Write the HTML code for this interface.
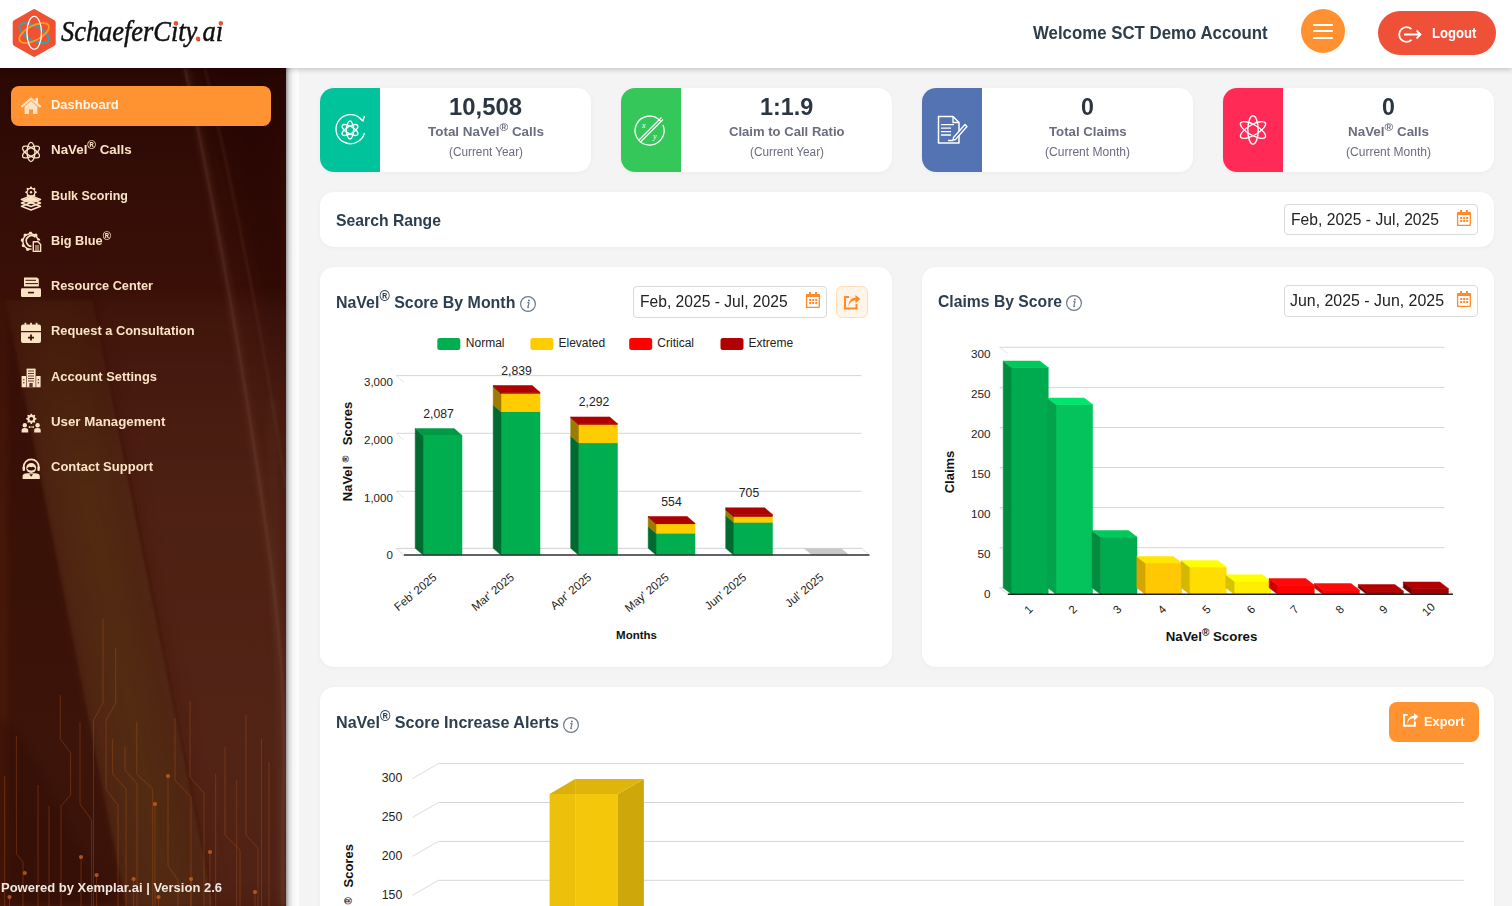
<!DOCTYPE html>
<html><head><meta charset="utf-8">
<style>
*{box-sizing:border-box;margin:0;padding:0}
html,body{width:1512px;height:906px;overflow:hidden;background:#f4f4f4;font-family:"Liberation Sans",sans-serif}
.abs{position:absolute}
#hdr{position:absolute;left:0;top:0;width:1512px;height:68px;background:#fff;box-shadow:0 2px 5px rgba(0,0,0,.18);z-index:5}
#side{position:absolute;left:0;top:68px;width:286px;height:838px;overflow:hidden;z-index:3;
 background:linear-gradient(170deg,#2a0904 0%,#330d06 25%,#4a1a0c 55%,#55230f 75%,#4a1c0c 100%)}
#strip{position:absolute;left:286px;top:68px;width:13px;height:838px;background:linear-gradient(90deg,#9a9a9a 0,#d8d8d8 3px,#f6f6f6 7px,#fdfdfd 13px);z-index:2}
.mi{position:absolute;left:51px;font-size:13px;font-weight:700;color:#fce4c6;white-space:nowrap;line-height:13px}
.t sup{font-size:.88em;vertical-align:top;position:relative;top:-.36em;line-height:1}
.t{z-index:6}
.card{position:absolute;background:#fff;border-radius:14px;box-shadow:0 1px 4px rgba(0,0,0,.04)}
.stat .ib{position:absolute;left:0;top:0;width:60px;height:84px;border-radius:14px 0 0 14px}
.stat .num{position:absolute;left:60px;right:0;text-align:center;top:94px;font-size:24px;font-weight:700;color:#2b3640}
.t{white-space:nowrap;position:absolute;line-height:1}
.date{position:absolute;width:194px;height:31.3px;border:1px solid #d9d9d9;border-radius:4px;background:#fff}
</style></head><body>

<!-- HEADER -->
<div id="hdr">
  <svg class="abs" style="left:0;top:0" width="240" height="68" viewBox="0 0 240 68">
    <path d="M34.2 11.6 L53.2 22.4 L53.2 43.6 L34.2 54.4 L15.2 43.6 L15.2 22.4 Z" fill="#ee5232" stroke="#ee5232" stroke-width="5" stroke-linejoin="round"/>
    <ellipse cx="34.1" cy="33" rx="16.3" ry="7.3" fill="none" stroke="#2aa8ba" stroke-width="1.8" transform="rotate(28 34.1 33)"/>
    <ellipse cx="34.1" cy="33" rx="16.3" ry="7.3" fill="none" stroke="#ff9a1e" stroke-width="1.8" transform="rotate(-28 34.1 33)"/>
    <ellipse cx="34.2" cy="32.8" rx="7.3" ry="16.4" fill="none" stroke="#fff" stroke-width="1.3"/>
  </svg>
  <div class="t" id="logo" style="left:61px;top:17px;font-family:'Liberation Serif',serif;font-size:29px;font-style:italic;color:#111;-webkit-text-stroke:0.5px #111;transform:scaleX(0.91);transform-origin:0 0">SchaeferCity.ai</div>
  <svg class="abs" style="left:0;top:0;z-index:7" width="240" height="68"><g fill="#ee5232"><circle cx="175.9" cy="23.3" r="2.2"/><circle cx="220.8" cy="23.1" r="2.2"/><circle cx="198" cy="38.7" r="2.2"/></g></svg>
  <div class="abs" style="left:1301px;top:9px;width:44px;height:44px;border-radius:50%;background:#ff9130"></div>
  <div class="abs" style="left:1313px;top:23.5px;width:20px;height:2px;background:#fff;border-radius:1px"></div>
  <div class="abs" style="left:1313px;top:30px;width:20px;height:2px;background:#fff;border-radius:1px"></div>
  <div class="abs" style="left:1313px;top:36.5px;width:20px;height:2px;background:#fff;border-radius:1px"></div>
  <div class="abs" style="left:1378px;top:11px;width:118px;height:44px;border-radius:22px;background:#ee5138"></div>
  <svg class="abs" style="left:1398px;top:25px" width="25" height="19" viewBox="0 0 25 19">
    <path d="M13.5 4.2 A7.3 7.3 0 1 0 13.5 14.8" fill="none" stroke="#fff" stroke-width="1.8"/>
    <path d="M6 9.5 H22.5 M18.5 5.5 L22.5 9.5 L18.5 13.5" fill="none" stroke="#fff" stroke-width="1.8"/>
  </svg>
</div>

<!-- SIDEBAR -->
<div id="side">
 <svg class="abs" style="left:0;top:0" width="286" height="838" viewBox="0 0 286 838">
  <defs>
   <linearGradient id="sg1" x1="0" y1="0" x2="0" y2="1">
    <stop offset="0" stop-color="#2a0804"/><stop offset="0.15" stop-color="#340d06"/><stop offset="0.35" stop-color="#3e1208"/><stop offset="0.55" stop-color="#45180a"/><stop offset="0.8" stop-color="#4a1c0d"/><stop offset="1" stop-color="#481a0c"/>
   </linearGradient>
   <linearGradient id="fadeTop" x1="0" y1="0" x2="0" y2="1">
    <stop offset="0" stop-color="#fff" stop-opacity="0"/><stop offset="0.25" stop-color="#fff" stop-opacity="0.35"/><stop offset="0.5" stop-color="#fff" stop-opacity="1"/><stop offset="1" stop-color="#fff" stop-opacity="1"/>
   </linearGradient>
   <mask id="mk"><rect width="286" height="838" fill="url(#fadeTop)"/></mask>
   <filter id="b4" filterUnits="userSpaceOnUse" x="-200" y="-200" width="700" height="1300"><feGaussianBlur stdDeviation="3"/></filter>
   <filter id="b10" filterUnits="userSpaceOnUse" x="-200" y="-200" width="700" height="1300"><feGaussianBlur stdDeviation="10"/></filter>
   <filter id="b1" filterUnits="userSpaceOnUse" x="-200" y="-200" width="700" height="1300"><feGaussianBlur stdDeviation="1.2"/></filter>
  </defs>
  <rect width="286" height="838" fill="url(#sg1)"/>
  <polygon points="200,0 286,0 286,330" fill="#1a0402" opacity="0.35" filter="url(#b10)"/>
  <g mask="url(#mk)">
   <polygon points="93,232 300,232 300,838 214,838" fill="#62362a" opacity="0.32" filter="url(#b10)"/>
   <polygon points="5,232 93,232 214,838 126,838" fill="#58301a" opacity="0.5" filter="url(#b1)"/>
   <polygon points="25,232 75,232 190,838 150,838" fill="#5a3a10" opacity="0.25" filter="url(#b10)"/>
   <polygon points="-20,232 5,232 126,838 -20,838" fill="#1e0602" opacity="0.28" filter="url(#b4)"/>
   <polygon points="-20,232 8,232 8,838 -20,838" fill="#6a2a10" opacity="0.25" filter="url(#b4)"/>
   <polygon points="-20,632 19,664 115,838 -20,838" fill="#1e0602" opacity="0.15" filter="url(#b4)"/>
   <line x1="93" y1="232" x2="214" y2="838" stroke="#2a0a04" stroke-width="1.2" opacity="0.35" filter="url(#b1)"/>
  </g>
  <path d="M186 0 C 205 90, 238 260, 266 460 S 280 700, 283 838" stroke="#8a5a48" stroke-width="5" fill="none" opacity="0.22" filter="url(#b4)"/>
  <path d="M184.8 0 C 205 90, 238 260, 266 460 S 280 700, 283 838" stroke="#9a6a58" stroke-width="1.2" fill="none" opacity="0.35" filter="url(#b1)"/>
  <path d="M205 0 C 228 100, 262 260, 286 420" stroke="#7a4a38" stroke-width="2.5" fill="none" opacity="0.2" filter="url(#b1)"/>
  <path d="M272 330 C 276 500, 279 700, 283 838" stroke="#6a3a2a" stroke-width="6" fill="none" opacity="0.2" filter="url(#b4)"/>
  <g stroke="#b8561c" stroke-width="0.8" fill="none" opacity="0.45"><path d="M103 551 L103 635 L93.5 652 L93.5 838"/><path d="M115.7 580 L115.7 635 L106 652 L106 721 L118 737 L118 838"/><path d="M60.3 627 L60.3 671 L70.6 685 L70.6 727 L61 738 L61 838"/><path d="M80 654 L80 736 L91.6 752 L91.6 838"/><path d="M16.4 668 L16.4 786 L23 794 L23 838"/><path d="M4.6 708 L4.6 838"/><path d="M38 717 L38 838"/><path d="M49 738 L49 838"/><path d="M112.6 671 L112.6 706 L126 721 L126 838"/><path d="M125 679 L125 702 L137 716 L137 838"/><path d="M136.7 654 L136.7 706 L152.7 721 L152.7 838"/><path d="M155 736 L155 838"/><path d="M168 708 L168 798 L178 812 L178 838"/><path d="M175 650 L175 712 L191 729 L191 838"/><path d="M190 633 L190 709 L204 725 L204 838"/><path d="M210 784 L210 838"/><path d="M225 679 L225 767 L240 782 L240 838"/><path d="M236.7 712 L236.7 838"/><path d="M246 647 L246 767 L258 780 L258 838"/><path d="M261.5 671 L261.5 838"/><path d="M269 694 L269 838"/><path d="M215.7 706 L215.7 838"/><path d="M81 789 L81 838"/><path d="M96.6 807 L96.6 838"/><path d="M133.6 811 L133.6 838"/><path d="M191 811 L191 838"/><path d="M9.5 829 L9.5 838"/><path d="M158.5 829 L158.5 838"/><path d="M255 824 L255 838"/></g>
  <g fill="#c8621e" opacity="0.8"><circle cx="155" cy="736" r="2.1"/><circle cx="168" cy="708" r="2.1"/><circle cx="210" cy="784" r="2.1"/><circle cx="81" cy="789" r="2.1"/><circle cx="24.8" cy="805" r="2.1"/><circle cx="96.6" cy="807" r="2.1"/><circle cx="133.6" cy="811" r="2.1"/><circle cx="191" cy="811" r="2.1"/><circle cx="9.5" cy="829" r="2.1"/><circle cx="158.5" cy="829" r="2.1"/><circle cx="255" cy="824" r="2.1"/></g>
 </svg>
 <div class="abs" style="left:11px;top:18px;width:260px;height:40px;border-radius:8px;background:#ff9231"></div>
</div>
<div id="menu" style="position:absolute;left:0;top:0;z-index:4">
</div>
<div id="strip"></div>

<!-- CONTENT -->
<div id="content">
 <!-- stat cards -->
 <div class="card stat" style="left:320px;top:88px;width:271px;height:84px"><div class="ib" style="background:#00c39b"></div></div>
 <div class="card stat" style="left:621px;top:88px;width:271px;height:84px"><div class="ib" style="background:#36c75a"></div></div>
 <div class="card stat" style="left:922px;top:88px;width:271px;height:84px"><div class="ib" style="background:#5373b3"></div></div>
 <div class="card stat" style="left:1223px;top:88px;width:271px;height:84px"><div class="ib" style="background:#ff2a55"></div></div>
 <svg class="abs" style="left:0;top:0;z-index:1" width="1512" height="200">
  <!-- teal icon -->
  <path d="M362.5 121 A14.5 14.5 0 1 0 364.5 133" fill="none" stroke="#fff" stroke-width="1.3"/>
  <path d="M359 117.5 L363 120.8 L364.5 116" fill="none" stroke="#fff" stroke-width="1.3"/>
  <ellipse cx="350" cy="130" rx="9" ry="3.6" fill="none" stroke="#fff" stroke-width="1.3" transform="rotate(90 350 130)"/><ellipse cx="350" cy="130" rx="9" ry="3.6" fill="none" stroke="#fff" stroke-width="1.3" transform="rotate(30 350 130)"/><ellipse cx="350" cy="130" rx="9" ry="3.6" fill="none" stroke="#fff" stroke-width="1.3" transform="rotate(-30 350 130)"/>
  <!-- green icon -->
  <path d="M660.5 121 A14.5 14.5 0 1 0 663 125" fill="none" stroke="#fff" stroke-width="1.3"/>
  <path d="M638.5 140.5 L661.5 117.5 M640.5 142 L663 119.5" fill="none" stroke="#fff" stroke-width="1.1"/>
  <text x="642" y="128" font-size="8" font-style="italic" fill="#fff" font-family="Liberation Serif">x</text>
  <text x="653" y="139" font-size="8" font-style="italic" fill="#fff" font-family="Liberation Serif">y</text>
  <!-- blue doc -->
  <path d="M938.5 116.5 H953 L959 122.5 V143 H938.5 Z" fill="none" stroke="#fff" stroke-width="1.5" stroke-linejoin="round"/>
  <path d="M953 116.5 V122.5 H959" fill="none" stroke="#fff" stroke-width="1.3"/>
  <path d="M941 124.7 H954 M941 128.2 H951 M941 131.7 H951 M941 135 H951 M948 140.5 H953" stroke="#fff" stroke-width="1.3"/>
  <path d="M953.5 137.5 L965 124.5 L967 126.5 L955.5 139.5 L953 140 Z" fill="#5373b3" stroke="#fff" stroke-width="1.3" stroke-linejoin="round"/>
  <!-- pink atom -->
  <ellipse cx="1253" cy="130" rx="14.2" ry="5.2" fill="none" stroke="#fff" stroke-width="1.4" transform="rotate(90 1253 130)"/><ellipse cx="1253" cy="130" rx="14.2" ry="5.2" fill="none" stroke="#fff" stroke-width="1.4" transform="rotate(30 1253 130)"/><ellipse cx="1253" cy="130" rx="14.2" ry="5.2" fill="none" stroke="#fff" stroke-width="1.4" transform="rotate(-30 1253 130)"/>
 </svg>

 <!-- search range -->
 <div class="card" style="left:320px;top:192px;width:1174px;height:55px"></div>
 <div class="date" style="left:1284px;top:204px"></div>

 <!-- chart cards -->
 <div class="card" style="left:320px;top:267px;width:572px;height:400px"></div>
 <div class="card" style="left:922px;top:267px;width:572px;height:400px"></div>
 <div class="card" style="left:320px;top:687px;width:1174px;height:300px"></div>
 <svg class="abs" style="left:0;top:0;z-index:1" width="1512" height="906" font-family="Liberation Sans, sans-serif">
<polygon points="396.0,548.4 861.6,548.4 869.4,555.0 403.8,555.0" fill="#fff" stroke="#e3e3e3" stroke-width="1"/>
<line x1="396" y1="375.6" x2="861.6" y2="375.6" stroke="#d6d6d6" stroke-width="1"/>
<line x1="396" y1="375.6" x2="403.8" y2="382.20000000000005" stroke="#e6e6e6" stroke-width="1"/>
<line x1="396" y1="433.3" x2="861.6" y2="433.3" stroke="#d6d6d6" stroke-width="1"/>
<line x1="396" y1="433.3" x2="403.8" y2="439.90000000000003" stroke="#e6e6e6" stroke-width="1"/>
<line x1="396" y1="491.3" x2="861.6" y2="491.3" stroke="#d6d6d6" stroke-width="1"/>
<line x1="396" y1="491.3" x2="403.8" y2="497.90000000000003" stroke="#e6e6e6" stroke-width="1"/>
<line x1="396" y1="548.4" x2="861.6" y2="548.4" stroke="#d6d6d6" stroke-width="1"/>
<line x1="396" y1="548.4" x2="403.8" y2="555" stroke="#e6e6e6" stroke-width="1"/>
<text x="392.8" y="385.9" text-anchor="end" font-size="11.5" fill="#222">3,000</text>
<text x="392.8" y="443.6" text-anchor="end" font-size="11.5" fill="#222">2,000</text>
<text x="392.8" y="501.5" text-anchor="end" font-size="11.5" fill="#222">1,000</text>
<text x="392.8" y="559.2" text-anchor="end" font-size="11.5" fill="#222">0</text>
<rect x="423" y="435.41" width="39" height="119.59" fill="#00ad4f" stroke="#00ad4f" stroke-width="0.5"/>
<polygon points="423.0,555.0 423.0,435.4 415.2,428.6 415.2,548.2" fill="#006b30" stroke="#006b30" stroke-width="0.5"/>
<polygon points="423.0,435.4 415.2,428.6 454.2,428.6 462.0,435.4" fill="#009a46" stroke="#009a46" stroke-width="0.5"/>
<text x="438.5" y="418.1" text-anchor="middle" font-size="12.2" fill="#222">2,087</text>
<rect x="501" y="411.75" width="39" height="143.25" fill="#00ad4f" stroke="#00ad4f" stroke-width="0.5"/>
<polygon points="501.0,555.0 501.0,411.8 493.2,404.9 493.2,548.2" fill="#006b30" stroke="#006b30" stroke-width="0.5"/>
<rect x="501" y="393.36" width="39" height="18.39" fill="#ffcc00" stroke="#ffcc00" stroke-width="0.5"/>
<polygon points="501.0,411.8 501.0,393.4 493.2,386.6 493.2,404.9" fill="#9c7b00" stroke="#9c7b00" stroke-width="0.5"/>
<rect x="501" y="392.33" width="39" height="1.03" fill="#b00000" stroke="#b00000" stroke-width="0.5"/>
<polygon points="501.0,393.4 501.0,392.3 493.2,385.5 493.2,386.6" fill="#7a0000" stroke="#7a0000" stroke-width="0.5"/>
<polygon points="501.0,392.3 493.2,385.5 532.2,385.5 540.0,392.3" fill="#ae0000" stroke="#ae0000" stroke-width="0.5"/>
<text x="516.5" y="375.0" text-anchor="middle" font-size="12.2" fill="#222">2,839</text>
<rect x="578.5" y="442.86" width="39" height="112.14" fill="#00ad4f" stroke="#00ad4f" stroke-width="0.5"/>
<polygon points="578.5,555.0 578.5,442.9 570.7,436.1 570.7,548.2" fill="#006b30" stroke="#006b30" stroke-width="0.5"/>
<rect x="578.5" y="424.47" width="39" height="18.39" fill="#ffcc00" stroke="#ffcc00" stroke-width="0.5"/>
<polygon points="578.5,442.9 578.5,424.5 570.7,417.7 570.7,436.1" fill="#9c7b00" stroke="#9c7b00" stroke-width="0.5"/>
<rect x="578.5" y="423.67" width="39" height="0.80" fill="#b00000" stroke="#b00000" stroke-width="0.5"/>
<polygon points="578.5,424.5 578.5,423.7 570.7,416.9 570.7,417.7" fill="#7a0000" stroke="#7a0000" stroke-width="0.5"/>
<polygon points="578.5,423.7 570.7,416.9 609.7,416.9 617.5,423.7" fill="#ae0000" stroke="#ae0000" stroke-width="0.5"/>
<text x="594.0" y="406.4" text-anchor="middle" font-size="12.2" fill="#222">2,292</text>
<rect x="656" y="533.23" width="39" height="21.77" fill="#00ad4f" stroke="#00ad4f" stroke-width="0.5"/>
<polygon points="656.0,555.0 656.0,533.2 648.2,526.4 648.2,548.2" fill="#006b30" stroke="#006b30" stroke-width="0.5"/>
<rect x="656" y="523.77" width="39" height="9.45" fill="#ffcc00" stroke="#ffcc00" stroke-width="0.5"/>
<polygon points="656.0,533.2 656.0,523.8 648.2,517.0 648.2,526.4" fill="#9c7b00" stroke="#9c7b00" stroke-width="0.5"/>
<rect x="656" y="523.26" width="39" height="0.52" fill="#b00000" stroke="#b00000" stroke-width="0.5"/>
<polygon points="656.0,523.8 656.0,523.3 648.2,516.5 648.2,517.0" fill="#7a0000" stroke="#7a0000" stroke-width="0.5"/>
<polygon points="656.0,523.3 648.2,516.5 687.2,516.5 695.0,523.3" fill="#ae0000" stroke="#ae0000" stroke-width="0.5"/>
<text x="671.5" y="506.0" text-anchor="middle" font-size="12.2" fill="#222">554</text>
<rect x="733.5" y="522.28" width="39" height="32.72" fill="#00ad4f" stroke="#00ad4f" stroke-width="0.5"/>
<polygon points="733.5,555.0 733.5,522.3 725.7,515.5 725.7,548.2" fill="#006b30" stroke="#006b30" stroke-width="0.5"/>
<rect x="733.5" y="516.55" width="39" height="5.73" fill="#ffcc00" stroke="#ffcc00" stroke-width="0.5"/>
<polygon points="733.5,522.3 733.5,516.6 725.7,509.8 725.7,515.5" fill="#9c7b00" stroke="#9c7b00" stroke-width="0.5"/>
<rect x="733.5" y="514.60" width="39" height="1.95" fill="#b00000" stroke="#b00000" stroke-width="0.5"/>
<polygon points="733.5,516.6 733.5,514.6 725.7,507.8 725.7,509.8" fill="#7a0000" stroke="#7a0000" stroke-width="0.5"/>
<polygon points="733.5,514.6 725.7,507.8 764.7,507.8 772.5,514.6" fill="#ae0000" stroke="#ae0000" stroke-width="0.5"/>
<text x="749.0" y="497.3" text-anchor="middle" font-size="12.2" fill="#222">705</text>
<polygon points="804.0,548.4 841.5,548.4 849.3,555.0 811.8,555.0" fill="#c8c8c8"/>
<line x1="403.8" y1="555" x2="869.4" y2="555" stroke="#333" stroke-width="1.6"/>
<text x="437.5" y="578.5" text-anchor="end" font-size="11.6" fill="#222" transform="rotate(-40 437.5 578.5)">Feb' 2025</text>
<text x="514.9" y="578.5" text-anchor="end" font-size="11.6" fill="#222" transform="rotate(-40 514.9 578.5)">Mar' 2025</text>
<text x="592.3" y="578.5" text-anchor="end" font-size="11.6" fill="#222" transform="rotate(-40 592.3 578.5)">Apr' 2025</text>
<text x="669.7" y="578.5" text-anchor="end" font-size="11.6" fill="#222" transform="rotate(-40 669.7 578.5)">May' 2025</text>
<text x="747.1" y="578.5" text-anchor="end" font-size="11.6" fill="#222" transform="rotate(-40 747.1 578.5)">Jun' 2025</text>
<text x="824.5" y="578.5" text-anchor="end" font-size="11.6" fill="#222" transform="rotate(-40 824.5 578.5)">Jul' 2025</text>
<text x="636.5" y="639.4" text-anchor="middle" font-size="11.5" font-weight="700" fill="#111">Months</text>
<g transform="translate(352 501.2) rotate(-90)"><text x="0" y="0" font-size="13" font-weight="700" fill="#111">NaVel</text><text x="38.6" y="-3.2" font-size="9.5" font-weight="700" fill="#111">®</text><text x="56" y="0" font-size="13" font-weight="700" fill="#111">Scores</text></g>
<rect x="437.3" y="338" width="23" height="12" rx="2.5" fill="#00ad4f"/>
<text x="465.8" y="347.2" font-size="12" fill="#222">Normal</text>
<rect x="530.4" y="338" width="23" height="12" rx="2.5" fill="#ffcc00"/>
<text x="558.5" y="347.2" font-size="12" fill="#222">Elevated</text>
<rect x="629.2" y="338" width="23" height="12" rx="2.5" fill="#ff0000"/>
<text x="657.3" y="347.2" font-size="12" fill="#222">Critical</text>
<rect x="720.5" y="338" width="23" height="12" rx="2.5" fill="#b00000"/>
<text x="748.5" y="347.2" font-size="12" fill="#222">Extreme</text>
<polygon points="999.5,587.8 1444.5,587.8 1452.9,594.3 1007.9,594.3" fill="#fff" stroke="#e3e3e3" stroke-width="1"/>
<line x1="999.5" y1="347.3" x2="1444.5" y2="347.3" stroke="#d6d6d6" stroke-width="1"/>
<line x1="999.5" y1="347.3" x2="1007.9" y2="353.8" stroke="#e6e6e6" stroke-width="1"/>
<text x="990.6" y="357.8" text-anchor="end" font-size="11.7" fill="#222">300</text>
<line x1="999.5" y1="387.4" x2="1444.5" y2="387.4" stroke="#d6d6d6" stroke-width="1"/>
<line x1="999.5" y1="387.4" x2="1007.9" y2="393.9" stroke="#e6e6e6" stroke-width="1"/>
<text x="990.6" y="397.9" text-anchor="end" font-size="11.7" fill="#222">250</text>
<line x1="999.5" y1="427.5" x2="1444.5" y2="427.5" stroke="#d6d6d6" stroke-width="1"/>
<line x1="999.5" y1="427.5" x2="1007.9" y2="434.0" stroke="#e6e6e6" stroke-width="1"/>
<text x="990.6" y="438.0" text-anchor="end" font-size="11.7" fill="#222">200</text>
<line x1="999.5" y1="467.5" x2="1444.5" y2="467.5" stroke="#d6d6d6" stroke-width="1"/>
<line x1="999.5" y1="467.5" x2="1007.9" y2="474.0" stroke="#e6e6e6" stroke-width="1"/>
<text x="990.6" y="478.0" text-anchor="end" font-size="11.7" fill="#222">150</text>
<line x1="999.5" y1="507.6" x2="1444.5" y2="507.6" stroke="#d6d6d6" stroke-width="1"/>
<line x1="999.5" y1="507.6" x2="1007.9" y2="514.1" stroke="#e6e6e6" stroke-width="1"/>
<text x="990.6" y="518.1" text-anchor="end" font-size="11.7" fill="#222">100</text>
<line x1="999.5" y1="547.7" x2="1444.5" y2="547.7" stroke="#d6d6d6" stroke-width="1"/>
<line x1="999.5" y1="547.7" x2="1007.9" y2="554.2" stroke="#e6e6e6" stroke-width="1"/>
<text x="990.6" y="558.2" text-anchor="end" font-size="11.7" fill="#222">50</text>
<line x1="999.5" y1="587.8" x2="1444.5" y2="587.8" stroke="#d6d6d6" stroke-width="1"/>
<line x1="999.5" y1="587.8" x2="1007.9" y2="594.3" stroke="#e6e6e6" stroke-width="1"/>
<text x="990.6" y="598.3" text-anchor="end" font-size="11.7" fill="#222">0</text>
<rect x="1011.6" y="367.5" width="36.6" height="226.80" fill="#00aa4e" stroke="#00aa4e" stroke-width="0.5"/>
<polygon points="1011.6,594.3 1011.6,367.5 1003.2,361.0 1003.2,587.8" fill="#008c3f" stroke="#008c3f" stroke-width="0.5"/>
<polygon points="1011.6,367.5 1003.2,361.0 1039.8,361.0 1048.2,367.5" fill="#00c95c" stroke="#00c95c" stroke-width="0.5"/>
<text x="1028.4" y="613.5" text-anchor="middle" font-size="11.5" fill="#222" transform="rotate(-45 1028.4 609.5)">1</text>
<rect x="1056.0" y="404.5" width="36.6" height="189.80" fill="#05c35c" stroke="#05c35c" stroke-width="0.5"/>
<polygon points="1056.0,594.3 1056.0,404.5 1047.6,398.0 1047.6,587.8" fill="#04a24c" stroke="#04a24c" stroke-width="0.5"/>
<polygon points="1056.0,404.5 1047.6,398.0 1084.2,398.0 1092.6,404.5" fill="#00e56b" stroke="#00e56b" stroke-width="0.5"/>
<text x="1072.8" y="613.5" text-anchor="middle" font-size="11.5" fill="#222" transform="rotate(-45 1072.8 609.5)">2</text>
<rect x="1100.4" y="537.1" width="36.6" height="57.20" fill="#00aa4e" stroke="#00aa4e" stroke-width="0.5"/>
<polygon points="1100.4,594.3 1100.4,537.1 1092.0,530.6 1092.0,587.8" fill="#008c3f" stroke="#008c3f" stroke-width="0.5"/>
<polygon points="1100.4,537.1 1092.0,530.6 1128.6,530.6 1137.0,537.1" fill="#00c95c" stroke="#00c95c" stroke-width="0.5"/>
<text x="1117.2" y="613.5" text-anchor="middle" font-size="11.5" fill="#222" transform="rotate(-45 1117.2 609.5)">3</text>
<rect x="1145.2" y="563.0" width="36.6" height="31.30" fill="#ffc800" stroke="#ffc800" stroke-width="0.5"/>
<polygon points="1145.2,594.3 1145.2,563.0 1136.8,556.5 1136.8,587.8" fill="#d4a500" stroke="#d4a500" stroke-width="0.5"/>
<polygon points="1145.2,563.0 1136.8,556.5 1173.4,556.5 1181.8,563.0" fill="#ffe600" stroke="#ffe600" stroke-width="0.5"/>
<text x="1162.0" y="613.5" text-anchor="middle" font-size="11.5" fill="#222" transform="rotate(-45 1162.0 609.5)">4</text>
<rect x="1189.6" y="567.1" width="36.6" height="27.20" fill="#ffdd00" stroke="#ffdd00" stroke-width="0.5"/>
<polygon points="1189.6,594.3 1189.6,567.1 1181.2,560.6 1181.2,587.8" fill="#d4b800" stroke="#d4b800" stroke-width="0.5"/>
<polygon points="1189.6,567.1 1181.2,560.6 1217.8,560.6 1226.2,567.1" fill="#ffff00" stroke="#ffff00" stroke-width="0.5"/>
<text x="1206.4" y="613.5" text-anchor="middle" font-size="11.5" fill="#222" transform="rotate(-45 1206.4 609.5)">5</text>
<rect x="1234.2" y="581.2" width="36.6" height="13.10" fill="#ffee00" stroke="#ffee00" stroke-width="0.5"/>
<polygon points="1234.2,594.3 1234.2,581.2 1225.8,574.7 1225.8,587.8" fill="#d4c500" stroke="#d4c500" stroke-width="0.5"/>
<polygon points="1234.2,581.2 1225.8,574.7 1262.4,574.7 1270.8,581.2" fill="#ffff00" stroke="#ffff00" stroke-width="0.5"/>
<text x="1251.0" y="613.5" text-anchor="middle" font-size="11.5" fill="#222" transform="rotate(-45 1251.0 609.5)">6</text>
<rect x="1277.6" y="585.1" width="36.6" height="9.20" fill="#ff0000" stroke="#ff0000" stroke-width="0.5"/>
<polygon points="1277.6,594.3 1277.6,585.1 1269.2,578.6 1269.2,587.8" fill="#cc0000" stroke="#cc0000" stroke-width="0.5"/>
<polygon points="1277.6,585.1 1269.2,578.6 1305.8,578.6 1314.2,585.1" fill="#ff0a0a" stroke="#ff0a0a" stroke-width="0.5"/>
<text x="1294.4" y="613.5" text-anchor="middle" font-size="11.5" fill="#222" transform="rotate(-45 1294.4 609.5)">7</text>
<rect x="1322.8" y="590.1" width="36.6" height="4.20" fill="#ff0000" stroke="#ff0000" stroke-width="0.5"/>
<polygon points="1322.8,594.3 1322.8,590.1 1314.4,583.6 1314.4,587.8" fill="#d40000" stroke="#d40000" stroke-width="0.5"/>
<polygon points="1322.8,590.1 1314.4,583.6 1351.0,583.6 1359.4,590.1" fill="#ff0a0a" stroke="#ff0a0a" stroke-width="0.5"/>
<text x="1339.6" y="613.5" text-anchor="middle" font-size="11.5" fill="#222" transform="rotate(-45 1339.6 609.5)">8</text>
<rect x="1366.7" y="591.1" width="36.6" height="3.20" fill="#a00000" stroke="#a00000" stroke-width="0.5"/>
<polygon points="1366.7,594.3 1366.7,591.1 1358.3,584.6 1358.3,587.8" fill="#7a0000" stroke="#7a0000" stroke-width="0.5"/>
<polygon points="1366.7,591.1 1358.3,584.6 1394.9,584.6 1403.3,591.1" fill="#b30000" stroke="#b30000" stroke-width="0.5"/>
<text x="1383.5" y="613.5" text-anchor="middle" font-size="11.5" fill="#222" transform="rotate(-45 1383.5 609.5)">9</text>
<rect x="1411.7" y="588.5" width="36.6" height="5.80" fill="#a00000" stroke="#a00000" stroke-width="0.5"/>
<polygon points="1411.7,594.3 1411.7,588.5 1403.3,582.0 1403.3,587.8" fill="#700000" stroke="#700000" stroke-width="0.5"/>
<polygon points="1411.7,588.5 1403.3,582.0 1439.9,582.0 1448.3,588.5" fill="#b30000" stroke="#b30000" stroke-width="0.5"/>
<text x="1428.5" y="613.5" text-anchor="middle" font-size="11.5" fill="#222" transform="rotate(-45 1428.5 609.5)">10</text>
<line x1="1007.9" y1="594.3" x2="1452.9" y2="594.3" stroke="#222" stroke-width="1.6"/>
<g transform="translate(954.2 493.3) rotate(-90)"><text x="0" y="0" font-size="13" font-weight="700" fill="#111">Claims</text></g>
<text x="1165.7" y="641.2" font-size="13.3" font-weight="700" fill="#111">NaVel<tspan font-size="10" dy="-5.5">®</tspan><tspan dy="5.5"> Scores</tspan></text>
<line x1="438.5" y1="763.6" x2="1463.8" y2="763.6" stroke="#d6d6d6" stroke-width="1"/>
<line x1="438.5" y1="763.6" x2="412.3" y2="778.6" stroke="#dcdcdc" stroke-width="1"/>
<text x="402.3" y="781.8" text-anchor="end" font-size="12.3" fill="#222">300</text>
<line x1="438.5" y1="802.5" x2="1463.8" y2="802.5" stroke="#d6d6d6" stroke-width="1"/>
<line x1="438.5" y1="802.5" x2="412.3" y2="817.5" stroke="#dcdcdc" stroke-width="1"/>
<text x="402.3" y="820.7" text-anchor="end" font-size="12.3" fill="#222">250</text>
<line x1="438.5" y1="841.4" x2="1463.8" y2="841.4" stroke="#d6d6d6" stroke-width="1"/>
<line x1="438.5" y1="841.4" x2="412.3" y2="856.4" stroke="#dcdcdc" stroke-width="1"/>
<text x="402.3" y="859.6" text-anchor="end" font-size="12.3" fill="#222">200</text>
<line x1="438.5" y1="880.3" x2="1463.8" y2="880.3" stroke="#d6d6d6" stroke-width="1"/>
<line x1="438.5" y1="880.3" x2="412.3" y2="895.3" stroke="#dcdcdc" stroke-width="1"/>
<text x="402.3" y="898.5" text-anchor="end" font-size="12.3" fill="#222">150</text>
<line x1="438.5" y1="919.2" x2="1463.8" y2="919.2" stroke="#d6d6d6" stroke-width="1"/>
<line x1="438.5" y1="919.2" x2="412.3" y2="934.2" stroke="#dcdcdc" stroke-width="1"/>
<text x="402.3" y="937.4" text-anchor="end" font-size="12.3" fill="#222">100</text>
<rect x="549.6" y="794" width="25.5" height="120" fill="#edc00c"/>
<rect x="575.1" y="794" width="42.8" height="120" fill="#f5c70a"/>
<polygon points="617.9,794.0 643.9,778.9 643.9,914.0 617.9,914.0" fill="#cea70b"/>
<polygon points="549.6,794.0 575.1,778.9 575.1,794.0" fill="#dab00b"/>
<polygon points="575.1,794.0 575.1,778.9 643.9,778.9 617.9,794.0" fill="#e0b50b"/>
<g transform="translate(352.9 887.5) rotate(-90)"><text x="0" y="0" font-size="13" font-weight="700" fill="#111">Scores</text><text x="-17" y="-1" font-size="10" font-weight="700" fill="#111">®</text></g>
 </svg>
  <div class="date" style="left:633.3px;top:286.3px"></div>
 <div class="abs" style="left:836px;top:286px;width:32px;height:32px;border-radius:6px;background:#fff4e8;border:1px solid #ffdcb8;z-index:5"></div>
 <div class="date" style="left:1284.4px;top:285.1px;height:31.6px"></div>
 <div class="abs" style="left:1389px;top:702px;width:90px;height:40px;border-radius:8px;background:#ff9231;z-index:5"></div>
<svg class="abs" style="left:1456px;top:208.9px;z-index:6" width="16" height="18" viewBox="1456 208.9 16 18">
<path d="M1457.6 225.9 V213.70000000000002 Q1457.6 212.5 1458.8 212.5 H1469.1 Q1470.3 212.5 1470.3 213.70000000000002 V224.6 Q1470.3 225.20000000000002 1469.7 225.20000000000002 H1458.8 Q1457.6 225.20000000000002 1457.6 224.0 Z" fill="none" stroke="#ff8a2a" stroke-width="1.3"/>
<rect x="1457" y="211.9" width="14" height="3" rx="1" fill="#ff8a2a"/>
<rect x="1460" y="209.9" width="2" height="3" fill="#ff8a2a"/><rect x="1466" y="209.9" width="2" height="3" fill="#ff8a2a"/>
<g fill="#ff8a2a"><rect x="1460.2" y="216.9" width="2" height="2"/><rect x="1463.2" y="216.9" width="2" height="2"/><rect x="1466.2" y="216.9" width="2" height="2"/>
<rect x="1460.2" y="219.9" width="2" height="2"/><rect x="1463.2" y="219.9" width="2" height="2"/><rect x="1466.2" y="219.9" width="2" height="2"/></g>
</svg>
<svg class="abs" style="left:805px;top:290.5px;z-index:6" width="16" height="18" viewBox="805 290.5 16 18">
<path d="M806.6 307.5 V295.3 Q806.6 294.1 807.8 294.1 H818.1 Q819.3 294.1 819.3 295.3 V306.2 Q819.3 306.8 818.7 306.8 H807.8 Q806.6 306.8 806.6 305.6 Z" fill="none" stroke="#ff8a2a" stroke-width="1.3"/>
<rect x="806" y="293.5" width="14" height="3" rx="1" fill="#ff8a2a"/>
<rect x="809" y="291.5" width="2" height="3" fill="#ff8a2a"/><rect x="815" y="291.5" width="2" height="3" fill="#ff8a2a"/>
<g fill="#ff8a2a"><rect x="809.2" y="298.5" width="2" height="2"/><rect x="812.2" y="298.5" width="2" height="2"/><rect x="815.2" y="298.5" width="2" height="2"/>
<rect x="809.2" y="301.5" width="2" height="2"/><rect x="812.2" y="301.5" width="2" height="2"/><rect x="815.2" y="301.5" width="2" height="2"/></g>
</svg>
<svg class="abs" style="left:1456px;top:289.5px;z-index:6" width="16" height="18" viewBox="1456 289.5 16 18">
<path d="M1457.6 306.5 V294.3 Q1457.6 293.1 1458.8 293.1 H1469.1 Q1470.3 293.1 1470.3 294.3 V305.2 Q1470.3 305.8 1469.7 305.8 H1458.8 Q1457.6 305.8 1457.6 304.6 Z" fill="none" stroke="#ff8a2a" stroke-width="1.3"/>
<rect x="1457" y="292.5" width="14" height="3" rx="1" fill="#ff8a2a"/>
<rect x="1460" y="290.5" width="2" height="3" fill="#ff8a2a"/><rect x="1466" y="290.5" width="2" height="3" fill="#ff8a2a"/>
<g fill="#ff8a2a"><rect x="1460.2" y="297.5" width="2" height="2"/><rect x="1463.2" y="297.5" width="2" height="2"/><rect x="1466.2" y="297.5" width="2" height="2"/>
<rect x="1460.2" y="300.5" width="2" height="2"/><rect x="1463.2" y="300.5" width="2" height="2"/><rect x="1466.2" y="300.5" width="2" height="2"/></g>
</svg>
<svg class="abs" style="left:844.1px;top:294.9px;z-index:6" width="17.0" height="15.0" viewBox="0 -1 17 15">
<path d="M5 1 H1 V12.5 H12.5 V8" fill="none" stroke="#ff8a2a" stroke-width="2"/>
<path d="M4.5 10.5 C 5.5 6, 8.5 4.5, 11.5 4.5 V7.5 L16.3 2.8 L11.5 -1 V1.8 C 7.5 1.8, 4.5 5, 4.5 10.5 Z" fill="#ff8a2a"/>
</svg>
<svg class="abs" style="left:1402.9px;top:713px;z-index:6" width="16.15" height="14.25" viewBox="0 -1 17 15">
<path d="M5 1 H1 V12.5 H12.5 V8" fill="none" stroke="#fff" stroke-width="2"/>
<path d="M4.5 10.5 C 5.5 6, 8.5 4.5, 11.5 4.5 V7.5 L16.3 2.8 L11.5 -1 V1.8 C 7.5 1.8, 4.5 5, 4.5 10.5 Z" fill="#fff"/>
</svg>
<svg class="abs" style="left:519px;top:295px;z-index:6" width="18" height="18" viewBox="0 0 18 18">
<circle cx="9" cy="9" r="7.4" fill="none" stroke="#6f7b86" stroke-width="1.2"/>
<circle cx="9.9" cy="5.4" r="1" fill="#6f7b86"/>
<path d="M8.3 7.6 H10 L8.8 12.3 Q8.7 12.8 9.3 12.6 L10 12.2" fill="none" stroke="#6f7b86" stroke-width="1.2" stroke-linejoin="round"/>
</svg>
<svg class="abs" style="left:1065px;top:293.7px;z-index:6" width="18" height="18" viewBox="0 0 18 18">
<circle cx="9" cy="9" r="7.4" fill="none" stroke="#6f7b86" stroke-width="1.2"/>
<circle cx="9.9" cy="5.4" r="1" fill="#6f7b86"/>
<path d="M8.3 7.6 H10 L8.8 12.3 Q8.7 12.8 9.3 12.6 L10 12.2" fill="none" stroke="#6f7b86" stroke-width="1.2" stroke-linejoin="round"/>
</svg>
<svg class="abs" style="left:562px;top:715.5px;z-index:6" width="18" height="18" viewBox="0 0 18 18">
<circle cx="9" cy="9" r="7.4" fill="none" stroke="#6f7b86" stroke-width="1.2"/>
<circle cx="9.9" cy="5.4" r="1" fill="#6f7b86"/>
<path d="M8.3 7.6 H10 L8.8 12.3 Q8.7 12.8 9.3 12.6 L10 12.2" fill="none" stroke="#6f7b86" stroke-width="1.2" stroke-linejoin="round"/>
</svg>
</div>

<div class="t" style="left:1032.90px;top:24.52px;font-size:17.7px;font-weight:700;color:#2e3d4a;transform:scaleX(0.9514);transform-origin:0 0;">Welcome SCT Demo Account</div>
<div class="t" style="left:1431.70px;top:26.35px;font-size:14px;font-weight:700;color:#fff;transform:scaleX(0.9384);transform-origin:0 0;">Logout</div>
<div class="t" style="left:51.00px;top:98.40px;font-size:13.7px;font-weight:700;color:#fff4e6;transform:scaleX(0.9469);transform-origin:0 0;z-index:6;">Dashboard</div>
<div class="t" style="left:51.00px;top:143.40px;font-size:13.7px;font-weight:700;color:#fbe3c5;transform:scaleX(0.9744);transform-origin:0 0;z-index:6;">NaVel<sup>®</sup> Calls</div>
<div class="t" style="left:51.00px;top:188.90px;font-size:13.7px;font-weight:700;color:#fbe3c5;transform:scaleX(0.9121);transform-origin:0 0;z-index:6;">Bulk Scoring</div>
<div class="t" style="left:51.00px;top:234.40px;font-size:13.7px;font-weight:700;color:#fbe3c5;transform:scaleX(0.9316);transform-origin:0 0;z-index:6;">Big Blue<sup>®</sup></div>
<div class="t" style="left:51.00px;top:279.40px;font-size:13.7px;font-weight:700;color:#fbe3c5;transform:scaleX(0.9311);transform-origin:0 0;z-index:6;">Resource Center</div>
<div class="t" style="left:51.00px;top:324.40px;font-size:13.7px;font-weight:700;color:#fbe3c5;transform:scaleX(0.9388);transform-origin:0 0;z-index:6;">Request a Consultation</div>
<div class="t" style="left:51.00px;top:369.90px;font-size:13.7px;font-weight:700;color:#fbe3c5;transform:scaleX(0.9417);transform-origin:0 0;z-index:6;">Account Settings</div>
<div class="t" style="left:51.00px;top:415.40px;font-size:13.7px;font-weight:700;color:#fbe3c5;transform:scaleX(0.9703);transform-origin:0 0;z-index:6;">User Management</div>
<div class="t" style="left:51.00px;top:460.40px;font-size:13.7px;font-weight:700;color:#fbe3c5;transform:scaleX(0.9513);transform-origin:0 0;z-index:6;">Contact Support</div>
<div class="t" style="left:1.30px;top:880.70px;font-size:13px;font-weight:700;color:#f1e7df;transform:scaleX(0.9994);transform-origin:0 0;z-index:6;">Powered by Xemplar.ai | Version 2.6</div>
<div class="t" style="left:449.00px;top:96.01px;font-size:23.5px;font-weight:700;color:#2b3642;transform:scaleX(1.0154);transform-origin:0 0;">10,508</div>
<div class="t" style="left:427.50px;top:125.23px;font-size:13.2px;font-weight:700;color:#6b6c80;transform:scaleX(1.0188);transform-origin:0 0;">Total NaVel<sup>®</sup> Calls</div>
<div class="t" style="left:448.50px;top:145.89px;font-size:12.3px;font-weight:400;color:#6b6c80;transform:scaleX(0.9581);transform-origin:0 0;">(Current Year)</div>
<div class="t" style="left:759.85px;top:96.01px;font-size:23.5px;font-weight:700;color:#2b3642;transform:scaleX(0.9948);transform-origin:0 0;">1:1.9</div>
<div class="t" style="left:728.70px;top:125.23px;font-size:13.2px;font-weight:700;color:#6b6c80;transform:scaleX(0.9921);transform-origin:0 0;">Claim to Call Ratio</div>
<div class="t" style="left:749.50px;top:145.89px;font-size:12.3px;font-weight:400;color:#6b6c80;transform:scaleX(0.9581);transform-origin:0 0;">(Current Year)</div>
<div class="t" style="left:1081.05px;top:96.01px;font-size:23.5px;font-weight:700;color:#2b3642;transform:scaleX(0.9864);transform-origin:0 0;">0</div>
<div class="t" style="left:1048.65px;top:125.23px;font-size:13.2px;font-weight:700;color:#6b6c80;transform:scaleX(1.0034);transform-origin:0 0;">Total Claims</div>
<div class="t" style="left:1045.00px;top:145.89px;font-size:12.3px;font-weight:400;color:#6b6c80;transform:scaleX(0.9793);transform-origin:0 0;">(Current Month)</div>
<div class="t" style="left:1382.05px;top:96.01px;font-size:23.5px;font-weight:700;color:#2b3642;transform:scaleX(0.9864);transform-origin:0 0;">0</div>
<div class="t" style="left:1348.00px;top:125.23px;font-size:13.2px;font-weight:700;color:#6b6c80;transform:scaleX(1.0165);transform-origin:0 0;">NaVel<sup>®</sup> Calls</div>
<div class="t" style="left:1346.00px;top:145.89px;font-size:12.3px;font-weight:400;color:#6b6c80;transform:scaleX(0.9793);transform-origin:0 0;">(Current Month)</div>
<div class="t" style="left:335.80px;top:212.10px;font-size:16.3px;font-weight:700;color:#2c3e50;transform:scaleX(0.9669);transform-origin:0 0;">Search Range</div>
<div class="t" style="left:1291.10px;top:211.69px;font-size:15.6px;font-weight:400;color:#222;transform:scaleX(1.0042);transform-origin:0 0;">Feb, 2025 - Jul, 2025</div>
<div class="t" style="left:335.60px;top:294.20px;font-size:16.3px;font-weight:700;color:#2c3e50;transform:scaleX(0.9782);transform-origin:0 0;">NaVel<sup>®</sup> Score By Month</div>
<div class="t" style="left:640.20px;top:293.79px;font-size:15.6px;font-weight:400;color:#222;transform:scaleX(1.0015);transform-origin:0 0;">Feb, 2025 - Jul, 2025</div>
<div class="t" style="left:937.90px;top:293.10px;font-size:16.3px;font-weight:700;color:#2c3e50;transform:scaleX(0.9649);transform-origin:0 0;">Claims By Score</div>
<div class="t" style="left:1290.40px;top:293.24px;font-size:15.9px;font-weight:400;color:#222;transform:scaleX(1.0017);transform-origin:0 0;">Jun, 2025 - Jun, 2025</div>
<div class="t" style="left:335.70px;top:714.30px;font-size:16.3px;font-weight:700;color:#2c3e50;transform:scaleX(0.9895);transform-origin:0 0;">NaVel<sup>®</sup> Score Increase Alerts</div>
<div class="t" style="left:1424.30px;top:714.63px;font-size:13.2px;font-weight:700;color:#fff;transform:scaleX(0.9721);transform-origin:0 0;">Export</div><svg class="abs" style="left:0;top:0;z-index:6" width="60" height="500" viewBox="0 0 60 500">
<path d="M22 106.3 L31 98.6 L40 106.3" fill="none" stroke="#fbe3c5" stroke-width="2.2" stroke-linecap="round" stroke-linejoin="round"/>
<rect x="35.6" y="98" width="2.4" height="5" fill="#fbe3c5"/>
<path d="M24.6 106.5 L31 101 L37.4 106.5 V114 H33 V109.5 H29 V114 H24.6 Z" fill="#fbe3c5"/>
<ellipse cx="31" cy="152" rx="9.6" ry="3.9" fill="none" stroke="#fbe3c5" stroke-width="1.3" transform="rotate(90 31 152)"/>
<ellipse cx="31" cy="152" rx="9.6" ry="3.9" fill="none" stroke="#fbe3c5" stroke-width="1.3" transform="rotate(30 31 152)"/>
<ellipse cx="31" cy="152" rx="9.6" ry="3.9" fill="none" stroke="#fbe3c5" stroke-width="1.3" transform="rotate(-30 31 152)"/>
<path d="M30.43 186.53 L31.57 186.53 L32.31 187.99 L33.12 188.33 L34.68 187.82 L35.48 188.62 L34.97 190.18 L35.31 190.99 L36.77 191.73 L36.77 192.87 L35.31 193.61 L34.97 194.42 L35.48 195.98 L34.68 196.78 L33.12 196.27 L32.31 196.61 L31.57 198.07 L30.43 198.07 L29.69 196.61 L28.88 196.27 L27.32 196.78 L26.52 195.98 L27.03 194.42 L26.69 193.61 L25.23 192.87 L25.23 191.73 L26.69 190.99 L27.03 190.18 L26.52 188.62 L27.32 187.82 L28.88 188.33 L29.69 187.99Z" fill="#fbe3c5"/><circle cx="31" cy="192.3" r="3.3" fill="#3a1208"/>
<circle cx="31" cy="192.3" r="1.2" fill="#fbe3c5"/>
<path d="M21.5 199.5 L31 195.9 L40.5 199.5 L31 203.1 Z" fill="none" stroke="#fbe3c5" stroke-width="1.6" stroke-linejoin="round"/>
<path d="M21.5 202.9 L31 199.3 L40.5 202.9 L31 206.5 Z" fill="none" stroke="#fbe3c5" stroke-width="1.6" stroke-linejoin="round"/>
<path d="M21.5 206.3 L31 202.70000000000002 L40.5 206.3 L31 209.9 Z" fill="none" stroke="#fbe3c5" stroke-width="1.6" stroke-linejoin="round"/>
<path d="M23.5 199.5 L31 196.6 L38.5 199.5 L31 202.4 Z" fill="#fbe3c5"/>
<path d="M29.65 231.74 L31.35 231.74 L32.65 233.48 L34.01 233.98 L36.12 233.47 L37.43 234.57 L37.30 236.74 L38.02 237.99 L39.97 238.96 L40.26 240.65 L38.77 242.22 L38.52 243.65 L39.38 245.64 L38.53 247.12 L36.37 247.37 L35.26 248.30 L34.64 250.38 L33.04 250.97 L31.22 249.77 L29.78 249.77 L27.96 250.97 L26.36 250.38 L25.74 248.30 L24.63 247.37 L22.47 247.12 L21.62 245.64 L22.48 243.65 L22.23 242.22 L20.74 240.65 L21.03 238.96 L22.98 237.99 L23.70 236.74 L23.57 234.57 L24.88 233.47 L26.99 233.98 L28.35 233.48Z" fill="#fbe3c5"/><circle cx="30.5" cy="241.5" r="6.9" fill="#3a1208"/>
<path d="M35.5 237.3 A5.3 5.3 0 1 0 33 246" fill="none" stroke="#fbe3c5" stroke-width="1.6"/>
<rect x="31.5" y="240.5" width="10" height="12" fill="#3a1208"/>
<path d="M33.3 241.8 H38 L40.6 244.4 V251.4 H33.3 Z" fill="none" stroke="#fbe3c5" stroke-width="1.4" stroke-linejoin="round"/>
<path d="M35 246 H39 M35 248 H39 M35 250 H39" stroke="#fbe3c5" stroke-width="1"/>
<path d="M24 277.5 H37 L38.8 279 V286.5 H24 Z" fill="#fbe3c5"/>
<path d="M25.5 280.3 H36 M25.5 283.6 H38" stroke="#3a1208" stroke-width="1"/>
<rect x="21" y="288.3" width="20" height="8.8" rx="1.3" fill="#fbe3c5"/>
<rect x="28" y="291.8" width="6" height="1.6" fill="#3a1208"/>
<path d="M21 331 V326.6 Q21 324.6 23 324.6 H39 Q41 324.6 41 326.6 V331 Z" fill="#fbe3c5"/>
<rect x="24.5" y="322.8" width="1.8" height="3" fill="#fbe3c5"/><rect x="30.1" y="322.8" width="1.8" height="3" fill="#fbe3c5"/><rect x="35.7" y="322.8" width="1.8" height="3" fill="#fbe3c5"/>
<path d="M21 332.2 H41 V341 Q41 343 39 343 H23 Q21 343 21 341 Z" fill="#fbe3c5"/>
<path d="M31 334.6 V340.6 M28 337.6 H34" stroke="#3a1208" stroke-width="1.8"/>
<rect x="26.6" y="368.6" width="9" height="18.7" fill="#fbe3c5"/>
<rect x="21.6" y="376" width="4.4" height="11.3" fill="#fbe3c5"/><rect x="36.2" y="376" width="4.4" height="11.3" fill="#fbe3c5"/>
<g fill="#3a1208" opacity="0.8"><rect x="28" y="370.5" width="6" height="1"/><rect x="28" y="373" width="6" height="1"/><rect x="28" y="375.5" width="6" height="1"/><rect x="28" y="378" width="6" height="1"/><rect x="28" y="380.5" width="6" height="1"/><rect x="29.3" y="383" width="3.4" height="4.3"/><rect x="23.2" y="379" width="1.2" height="1.4"/><rect x="23.2" y="382" width="1.2" height="1.4"/><rect x="37.8" y="379" width="1.2" height="1.4"/><rect x="37.8" y="382" width="1.2" height="1.4"/></g>
<path d="M30.79 413.63 L31.81 413.63 L32.43 415.07 L33.14 415.36 L34.60 414.78 L35.32 415.50 L34.74 416.96 L35.03 417.67 L36.47 418.29 L36.47 419.31 L35.03 419.93 L34.74 420.64 L35.32 422.10 L34.60 422.82 L33.14 422.24 L32.43 422.53 L31.81 423.97 L30.79 423.97 L30.17 422.53 L29.46 422.24 L28.00 422.82 L27.28 422.10 L27.86 420.64 L27.57 419.93 L26.13 419.31 L26.13 418.29 L27.57 417.67 L27.86 416.96 L27.28 415.50 L28.00 414.78 L29.46 415.36 L30.17 415.07Z" fill="#fbe3c5"/><circle cx="31.3" cy="418.8" r="1.9" fill="#3a1208"/>
<circle cx="24.8" cy="425.2" r="2.2" fill="#fbe3c5"/><circle cx="37.6" cy="425.2" r="2.2" fill="#fbe3c5"/>
<path d="M21.6 432.6 V430.5 Q21.6 428.1 24.8 428.1 Q28.2 428.1 28.2 430.5 V432.6 Z" fill="#fbe3c5"/>
<path d="M34.2 432.6 V430.5 Q34.2 428.1 37.5 428.1 Q40.7 428.1 40.7 430.5 V432.6 Z" fill="#fbe3c5"/>
<path d="M28.8 427 H33.8 M29.8 426 L28.8 427 L29.8 428 M32.8 426 L33.8 427 L32.8 428" fill="none" stroke="#fbe3c5" stroke-width="0.9"/>
<path d="M23.6 468.5 V467 A7.6 7.6 0 0 1 38.8 467 V468.5" fill="none" stroke="#fbe3c5" stroke-width="1.6"/>
<circle cx="31.2" cy="468" r="5" fill="#fbe3c5"/>
<rect x="22.6" y="466.3" width="2.4" height="4.6" rx="1" fill="#fbe3c5"/><rect x="37.4" y="466.3" width="2.4" height="4.6" rx="1" fill="#fbe3c5"/>
<path d="M27 468.5 Q29 465.8 31.2 467.2 Q33.5 465.8 35.4 468.5 Q33.5 471 31.2 470.5 Q29 471 27 468.5 Z" fill="#3a1208"/>
<path d="M22.6 479 V476.5 Q22.6 473.2 27.5 473.2 H34.9 Q39.8 473.2 39.8 476.5 V479 Z" fill="#fbe3c5"/>
<path d="M29.3 474.2 H33.1 L31.2 476.8 Z" fill="#3a1208"/>
</svg>
</body></html>
